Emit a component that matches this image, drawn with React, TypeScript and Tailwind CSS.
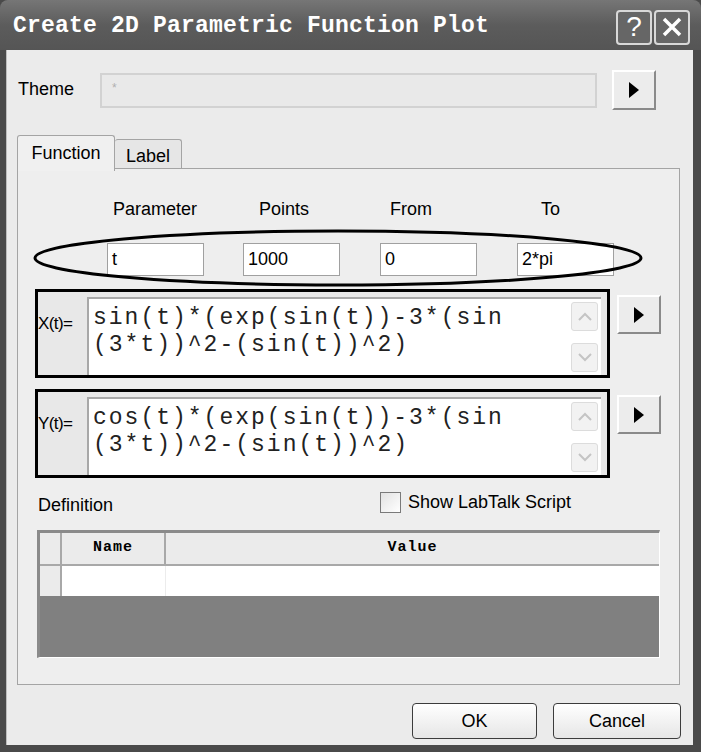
import React from 'react';

function ArrowButton({ className = '' }: { className?: string }) {
  return (
    <div
      className={`w-[44px] h-[39px] flex items-center justify-center bg-[#ececec] border-t-2 border-l-2 border-t-white border-l-white border-r-2 border-b-2 border-r-[#8a8a8a] border-b-[#8a8a8a] ${className}`}
    >
      <svg width="12" height="16" viewBox="0 0 12 16">
        <path d="M1 0 L11 8 L1 16 Z" fill="#000" />
      </svg>
    </div>
  );
}

function ScrollBar() {
  return (
    <div className="w-[27px] flex flex-col justify-between py-[3px] mr-[3px]">
      <div className="h-[29px] rounded-[3px] border border-[#dcdcdc] bg-[#f2f2f2] flex items-center justify-center">
        <svg width="14" height="9" viewBox="0 0 14 9">
          <path d="M1 8 L7 2 L13 8" stroke="#c4c4c4" strokeWidth="2" fill="none" />
        </svg>
      </div>
      <div className="h-[29px] rounded-[3px] border border-[#dcdcdc] bg-[#f2f2f2] flex items-center justify-center">
        <svg width="14" height="9" viewBox="0 0 14 9">
          <path d="M1 1 L7 7 L13 1" stroke="#c4c4c4" strokeWidth="2" fill="none" />
        </svg>
      </div>
    </div>
  );
}

function FuncBox({ label, lines }: { label: string; lines: string[] }) {
  return (
    <div className="flex items-start">
      <div className="w-[575px] h-[89px] border-[3px] border-black flex bg-[#e8e8e8]">
        <div className="w-[49px] pt-[19px] text-[17px] tracking-[-0.6px] text-black whitespace-nowrap">{label}</div>
        <div className="flex-1 mt-[5px] mr-[6px] bg-white border-t-2 border-l-2 border-[#a8a8a8] flex">
          <div className="flex-1 pl-[4px] pt-[6px] font-['Liberation_Mono',monospace] text-[23px] tracking-[2px] leading-[27px] text-[#222]">
            {lines.map((l, i) => (
              <div key={i} className="whitespace-pre">{l}</div>
            ))}
          </div>
          <ScrollBar />
        </div>
      </div>
      <ArrowButton className="ml-[7px] mt-[6px]" />
    </div>
  );
}

export default function App() {
  return (
    <div className="w-[701px] h-[752px] bg-[#4a4a4a] flex flex-col overflow-hidden font-['Liberation_Sans',Arial,sans-serif] text-black">
      {/* title bar */}
      <div className="h-[50px] flex items-center pl-[13px] pr-[11px] bg-gradient-to-b from-[#767676] via-[#5c5c5c] to-[#555555] rounded-t-[8px]">
        <span className="flex-1 text-white font-bold text-[23px] font-['Liberation_Mono',monospace] tracking-[0.2px] pt-[2px]">
          Create 2D Parametric Function Plot
        </span>
        <div className="flex gap-[2px] mt-[4px]">
          <div className="w-[36px] h-[35px] rounded-[4px] border-2 border-[#d8d8d8] bg-[#666666] flex items-center justify-center text-white text-[28px] leading-none">
            ?
          </div>
          <div className="w-[36px] h-[35px] rounded-[4px] border-2 border-[#d8d8d8] bg-[#666666] flex items-center justify-center">
            <svg width="22" height="22" viewBox="0 0 22 22">
              <path d="M3 3 L19 19 M19 3 L3 19" stroke="#fff" strokeWidth="3.5" />
            </svg>
          </div>
        </div>
      </div>

      {/* body */}
      <div className="flex-1 ml-[6px] mr-[8px] mb-[7px] bg-[#ebebeb] border-l border-[#bdbdbd] flex flex-col px-[10px]">
        {/* theme row */}
        <div className="flex items-center mt-[20px] h-[40px]">
          <div className="w-[83px] pl-[1px] text-[18px] mb-[2px]">Theme</div>
          <div className="w-[497px] h-[35px] border-2 border-[#d2d2d2] bg-[#e9e9e9] text-[#b0b0b0] text-[12px] pl-[10px] pt-[4px]">*</div>
          <ArrowButton className="ml-[15px] h-[40px]" />
        </div>

        {/* tabs */}
        <div className="flex items-end mt-[24px] h-[36px]">
          <div className="w-[98px] h-[36px] bg-[#f0f0f0] border border-b-0 border-[#a4a4a4] rounded-t-[3px] flex items-center justify-center text-[18px] relative z-10 -mb-px">
            Function
          </div>
          <div className="w-[67px] h-[31px] bg-[#e6e6e6] border border-b-0 border-l-0 border-[#a4a4a4] rounded-t-[3px] flex items-center justify-center text-[18px] pt-[2px]">
            Label
          </div>
        </div>

        {/* panel */}
        <div className="w-[663px] h-[517px] -mt-[2px] border border-[#a4a4a4] bg-[#eeeeee] flex flex-col pl-[17px] relative">
          {/* headers */}
          <div className="flex mt-[28px] h-[24px] text-[18px] leading-[24px]">
            <div className="w-[97px] ml-[72px] pl-[6px]">Parameter</div>
            <div className="w-[97px] ml-[39px] pl-[16px]">Points</div>
            <div className="w-[97px] ml-[40px] pl-[10px]">From</div>
            <div className="w-[97px] ml-[40px] pl-[24px]">To</div>
          </div>
          <div className="flex mt-[22px] h-[33px] text-[18px]">
            {['t', '1000', '0', '2*pi'].map((v, i) => (
              <div
                key={i}
                className={`w-[97px] h-[33px] bg-white border border-[#a0a0a0] pl-[4px] leading-[31px] ${
                  i === 0 ? 'ml-[72px]' : i === 1 ? 'ml-[39px]' : 'ml-[40px]'
                }`}
              >
                {v}
              </div>
            ))}
          </div>

          {/* annotation ellipse */}
          <svg className="absolute left-[14px] top-[58px]" width="612" height="62" viewBox="0 0 612 62">
            <ellipse cx="306" cy="31" rx="303" ry="27" fill="none" stroke="#000" strokeWidth="3" />
          </svg>

          <div className="mt-[13px]">
            <FuncBox label="X(t)=" lines={['sin(t)*(exp(sin(t))-3*(sin', '(3*t))^2-(sin(t))^2)']} />
          </div>
          <div className="mt-[11px]">
            <FuncBox label="Y(t)=" lines={['cos(t)*(exp(sin(t))-3*(sin', '(3*t))^2-(sin(t))^2)']} />
          </div>

          {/* definition row */}
          <div className="flex items-center mt-[12px] h-[24px] text-[18px]">
            <div className="w-[345px] pl-[3px] mt-[6px]">Definition</div>
            <div className="w-[21px] h-[21px] border border-[#7a7a7a] bg-gradient-to-br from-[#e2e2e2] to-white" />
            <div className="ml-[7px]">Show LabTalk Script</div>
          </div>

          {/* table */}
          <div className="w-[623px] h-[128px] mt-[16px] ml-[2px] border-t-[3px] border-l-[3px] border-[#8a8a8a] border-r border-b border-r-white border-b-white bg-[#808080] flex flex-col">
            <div className="flex h-[33px] bg-[#ebebeb] border-b-2 border-[#a8a8a8] font-['Liberation_Mono',monospace] font-bold text-[15px] tracking-[1px]">
              <div className="w-[22px] border-r-2 border-[#a8a8a8]" />
              <div className="w-[104px] border-r-2 border-[#a8a8a8] flex items-center justify-center">Name</div>
              <div className="flex-1 flex items-center justify-center">Value</div>
            </div>
            <div className="flex h-[30px] bg-white">
              <div className="w-[22px] bg-[#ebebeb] border-r-2 border-[#a8a8a8]" />
              <div className="w-[104px] border-r border-[#ececec]" />
              <div className="flex-1" />
            </div>
          </div>
        </div>

        {/* buttons */}
        <div className="flex justify-end gap-[16px] mt-[18px] pr-[2px] text-[18px]">
          <div className="w-[125px] h-[36px] rounded-[4px] border border-[#3c3c3c] bg-gradient-to-b from-white to-[#e6e6e6] flex items-center justify-center">
            OK
          </div>
          <div className="w-[128px] h-[36px] rounded-[4px] border border-[#3c3c3c] bg-gradient-to-b from-white to-[#e6e6e6] flex items-center justify-center">
            Cancel
          </div>
        </div>
      </div>
    </div>
  );
}
